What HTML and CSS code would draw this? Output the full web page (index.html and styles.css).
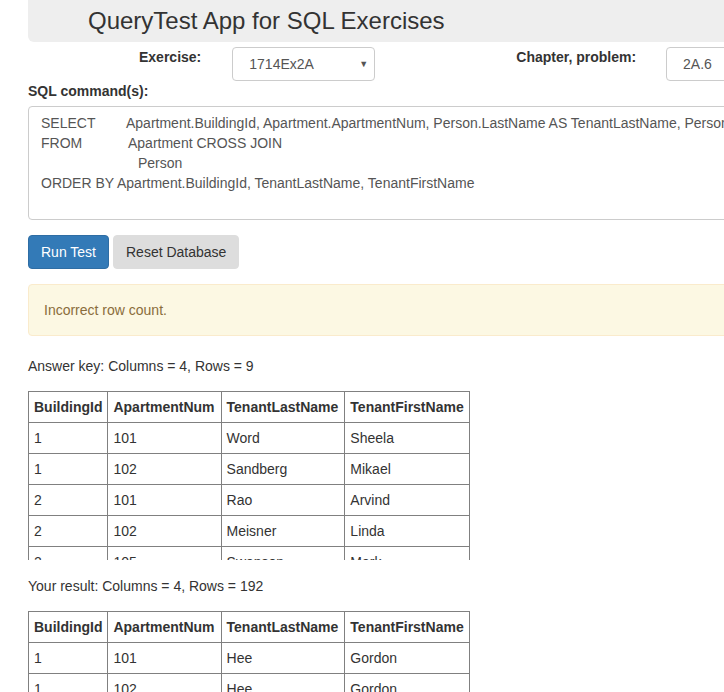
FILE: index.html
```html
<!DOCTYPE html>
<html>
<head>
<meta charset="utf-8">
<link rel="stylesheet" href="styles.css">
</head>
<body>
<div class="page">
  <div class="header"><h1 class="title">QueryTest App for SQL Exercises</h1></div>
  <div class="controls">
    <label class="lbl lbl-ex">Exercise:</label>
    <div class="select"><span>1714Ex2A</span><span class="arrow">▼</span></div>
    <label class="lbl lbl-ch">Chapter, problem:</label>
    <div class="input">2A.6</div>
  </div>
  <div class="lbl sql-lbl">SQL command(s):</div>
  <div class="textarea">
    <div class="line"><span class="kw kw-sel">SELECT</span>Apartment.BuildingId, Apartment.ApartmentNum, Person.LastName AS TenantLastName, Person.FirstName AS TenantFirstName</div>
    <div class="line"><span class="kw kw-from">FROM</span>Apartment CROSS JOIN</div>
    <div class="line"><span class="indent"></span>Person</div>
    <div class="line">ORDER BY Apartment.BuildingId, TenantLastName, TenantFirstName</div>
  </div>
  <div class="buttons">
    <button class="btn btn-primary">Run Test</button>
    <button class="btn btn-default">Reset Database</button>
  </div>
  <div class="alert">Incorrect row count.</div>
  <p class="summary">Answer key: Columns = 4, Rows = 9</p>
  <div class="table-wrap">
    <table class="grid">
      <tr><th>BuildingId</th><th>ApartmentNum</th><th>TenantLastName</th><th>TenantFirstName</th></tr>
      <tr><td>1</td><td>101</td><td>Word</td><td>Sheela</td></tr>
      <tr><td>1</td><td>102</td><td>Sandberg</td><td>Mikael</td></tr>
      <tr><td>2</td><td>101</td><td>Rao</td><td>Arvind</td></tr>
      <tr><td>2</td><td>102</td><td>Meisner</td><td>Linda</td></tr>
      <tr><td>2</td><td>105</td><td>Swanson</td><td>Mark</td></tr>
      <tr><td>2</td><td>106</td><td>Kim</td><td>Alice</td></tr>
    </table>
  </div>
  <p class="summary">Your result: Columns = 4, Rows = 192</p>
  <div class="table-wrap">
    <table class="grid">
      <tr><th>BuildingId</th><th>ApartmentNum</th><th>TenantLastName</th><th>TenantFirstName</th></tr>
      <tr><td>1</td><td>101</td><td>Hee</td><td>Gordon</td></tr>
      <tr><td>1</td><td>102</td><td>Hee</td><td>Gordon</td></tr>
      <tr><td>1</td><td>103</td><td>Hee</td><td>Gordon</td></tr>
      <tr><td>1</td><td>104</td><td>Hee</td><td>Gordon</td></tr>
    </table>
  </div>
</div>
</body>
</html>
```
FILE: styles.css
```css
html, body {
  margin: 0;
  padding: 0;
  overflow: hidden;
}
body {
  font-family: "Liberation Sans", Arial, sans-serif;
  font-size: 14px;
  line-height: 20px;
  color: #333;
  background: #fff;
}
.page {
  width: 800px;
  padding-left: 28px;
}
.header {
  height: 42px;
  background: #eee;
  border-radius: 0 0 6px 6px;
  padding-left: 60px;
  display: flex;
  align-items: center;
}
.title {
  margin: 0;
  font-size: 24px;
  font-weight: normal;
  line-height: 30px;
  color: #333;
}
.controls {
  display: flex;
  align-items: flex-start;
  margin-top: 5px;
}
.lbl {
  font-weight: bold;
}
.lbl-ex {
  margin-left: 111px;
}
.select {
  margin-left: 31px;
  width: 143px;
  height: 34px;
  box-sizing: border-box;
  border: 1px solid #ccc;
  border-radius: 4px;
  padding: 0 6px 0 16px;
  display: flex;
  align-items: center;
  justify-content: space-between;
  color: #555;
}
.arrow {
  font-size: 9px;
  color: #555;
}
.lbl-ch {
  margin-left: 141px;
}
.input {
  margin-left: 30px;
  width: 120px;
  height: 34px;
  box-sizing: border-box;
  border: 1px solid #ccc;
  border-radius: 4px;
  padding: 0 16px;
  display: flex;
  align-items: center;
  color: #555;
}
.sql-lbl {
  margin-top: 0;
}
.textarea {
  margin-top: 5px;
  height: 114px;
  box-sizing: border-box;
  border: 1px solid #ccc;
  border-radius: 4px;
  padding: 6px 12px;
  color: #555;
  white-space: nowrap;
  overflow: hidden;
}
.kw {
  display: inline-block;
}
.kw-sel { width: 85px; }
.kw-from { width: 87px; }
.indent {
  display: inline-block;
  width: 97px;
}
.buttons {
  display: flex;
  gap: 4px;
  margin-top: 15px;
}
.btn {
  font-family: inherit;
  font-size: 14px;
  line-height: 20px;
  height: 34px;
  padding: 6px 12px;
  border-radius: 4px;
  border: 1px solid transparent;
  cursor: pointer;
}
.btn-primary {
  background: #337ab7;
  border-color: #2e6da4;
  color: #fff;
}
.btn-default {
  background: #ddd;
  border-color: #ddd;
  color: #333;
}
.alert {
  margin-top: 15px;
  padding: 15px;
  background: #fcf8e3;
  border: 1px solid #faebcc;
  border-radius: 4px;
  color: #8a6d3b;
}
.summary {
  margin: 20px 0 15px;
}
.summary + .table-wrap + .summary {
  margin-top: 16px;
}
.table-wrap {
  height: 169px;
  overflow: hidden;
}
.grid {
  border-collapse: collapse;
}
.grid th, .grid td {
  border: 1px solid #808080;
  padding: 5px;
  text-align: left;
  white-space: nowrap;
}
.grid th + th {
  padding-right: 6px;
}
.grid th:last-child {
  padding-right: 5px;
}
.grid th {
  font-weight: bold;
}
```
